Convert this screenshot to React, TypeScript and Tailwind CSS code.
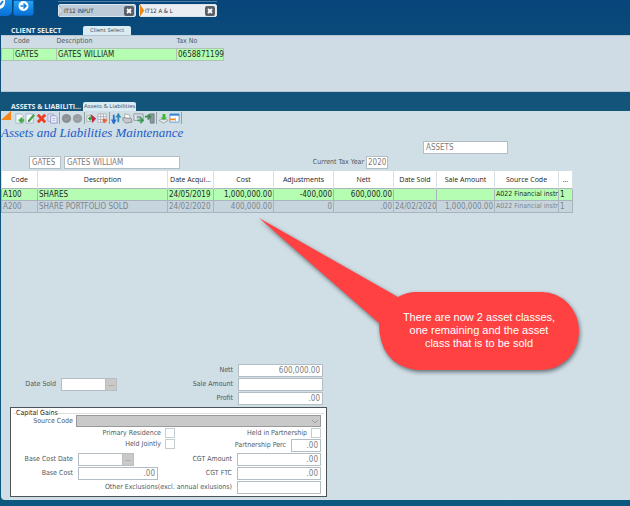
import type { ReactNode } from 'react'

const tools: (ReactNode | null)[] = [
  <><path d="M2 1h6l2 2v8H2z" fill="#f4f8fb" stroke="#a5b4c4" /><path d="M8 5v6M5 8h6" stroke="#3fae3f" strokeWidth="2.4" /></>,
  <><path d="M1 1h8v10H1z" fill="#f4f8fb" stroke="#a5b4c4" /><path d="M4 9l6-7" stroke="#45a545" strokeWidth="2.4" /><path d="M3 10l1-2 1 1z" fill="#555" /></>,
  <path d="M2 2l8 8M10 2l-8 8" stroke="#ec3c22" strokeWidth="3" />,
  <><path d="M1 1h6v8H1z" fill="#e3e6f8" stroke="#a3a8d2" /><path d="M4 3h5l2 2v6H4z" fill="#eef0fc" stroke="#9298c8" /><path d="M6 6h3M6 8h3" stroke="#a9afdb" /></>,
  null,
  <><circle cx="6" cy="6" r="5" fill="#8b9094" /><path d="M4 6l1.5 1.5L8 5" fill="none" stroke="#a5aaad" /></>,
  <><circle cx="6" cy="6" r="5" fill="#999ea2" /><path d="M4 6l1.5 1.5L8 5" fill="none" stroke="#b0b5b8" /></>,
  null,
  <><path d="M1 3h6v6H1z" fill="#fff" stroke="#a9a9a9" /><path d="M2 6l3-3v2h3v2H5v2z" fill="#249a38" /><path d="M5 1l6 5-4 5z" fill="#c22846" /></>,
  <><path d="M1 1h9v9H1z" fill="#fff" stroke="#aab" /><path d="M1 4h9M1 7h9M4 1v9M7 1v9" stroke="#aab" /><path d="M6 8h5M8 6v5" stroke="#e4632e" strokeWidth="2" /></>,
  null,
  <><path d="M3 2v6M1.500 8l1.500 3 1.500-3z" stroke="#2a6fd0" strokeWidth="2" fill="#2a6fd0" /><path d="M8 10V4M6.500 4L8 1.500 9.500 4z" stroke="#2f8fb0" strokeWidth="2" fill="#2f8fb0" /></>,
  <><path d="M3 1l5 1 1 4H3z" fill="#fff" stroke="#aaa" /><path d="M1 5l9 1 1 4-7 1-3-3z" fill="#c6c9cd" stroke="#8b9095" /></>,
  <><path d="M1 1h10v7H1z" fill="#dfe7ea" stroke="#8a949a" /><path d="M4 3h5v3H4z" fill="#92a4ad" /><path d="M5 8h5M8 5l3 3-3 3" fill="none" stroke="#3f9c55" strokeWidth="2" /></>,
  <><path d="M6 1h5v10H7z" fill="#8b989f" stroke="#6c7a82" /><path d="M1 4h6M4 2l3 2-3 3" fill="none" stroke="#3f8b50" strokeWidth="2" /></>,
  null,
  <><path d="M1 8l5-2 5 2-5 3z" fill="#e4e8ea" stroke="#98a3aa" /><path d="M5 1h3v4h2L6 8 3 5h2z" fill="#3db52d" /></>,
  <><path d="M1 1h10v9H1z" fill="#fff" stroke="#5b99da" /><path d="M1 2h10" stroke="#3d86d8" strokeWidth="2" /><path d="M1 7h6" stroke="#f28a1c" strokeWidth="2" /><path d="M7 5v5" stroke="#9bbfe5" /></>,
]

const columns = [
  { label: 'Code', width: 'w-[36px]', cell: 'text-left' },
  { label: 'Description', width: 'w-[130px]', cell: 'text-left' },
  { label: 'Date Acqui...', width: 'w-[46px]', cell: 'text-left' },
  { label: 'Cost', width: 'w-[60px]', cell: 'text-right' },
  { label: 'Adjustments', width: 'w-[60px]', cell: 'text-right' },
  { label: 'Nett', width: 'w-[60px]', cell: 'text-right' },
  { label: 'Date Sold', width: 'w-[43px]', cell: 'text-left' },
  { label: 'Sale Amount', width: 'w-[58px]', cell: 'text-right' },
  { label: 'Source Code', width: 'w-[64px]', cell: 'text-left text-[7px]' },
  { label: '...', width: 'w-[14px]', cell: 'text-left' },
]

const rows = [
  ['A100', 'SHARES', '24/05/2019', '1,000,000.00', '-400,000', '600,000.00', '', '', 'A022 Financial instr', '1'],
  ['A200', 'SHARE PORTFOLIO SOLD', '24/02/2020', '400,000.00', '0', '.00', '24/02/2020', '1,000,000.00', 'A022 Financial instr', '1'],
]

const box = 'h-[13px] border border-[#b4bdc3] bg-white px-[2px] text-[8px] text-[#7b7b7b] outline-none'

function Tab({ label, active }: { label: string; active?: boolean }) {
  return (
    <div className={`flex h-[13px] w-[78px] items-center rounded-[2px] border border-[#dbe5ec] ${active ? 'bg-[#e9eef3]' : 'bg-[#bccbd7]'}`}>
      <svg viewBox="0 0 5 11" className="h-[11px] w-[5px] shrink-0">
        <path d="M0 0l4 5.500-4 5.500z" fill={active ? '#f58a0b' : '#d7dade'} stroke={active ? '#d97400' : '#8b98a3'} strokeWidth="0.500" />
      </svg>
      <button className="flex-1 text-left text-[6px] text-[#333]">{label}</button>
      <button aria-label={`Close ${label}`} className="mr-px shrink-0">
        <svg viewBox="0 0 10 10" className="size-[10px]">
          <rect width="10" height="10" rx="2" fill="#5a6068" />
          <path d="M3 3l4 4M7 3l-4 4" stroke="#fff" strokeWidth="1.800" />
        </svg>
      </button>
    </div>
  )
}

function SectionTitle({ title, tab }: { title: string; tab: string }) {
  return (
    <div className="flex h-[9px] items-center pl-[11px]">
      <h2 className="w-[72px] font-['Open_Sans',sans-serif] text-[7px] font-bold whitespace-nowrap text-[#e6eef5]">{title}</h2>
      <button className="h-[9px] min-w-[48px] rounded-t-[2px] bg-[#d9ebf3] px-px text-center font-['Open_Sans',sans-serif] text-[6px] whitespace-nowrap text-[#44525c]">{tab}</button>
    </div>
  )
}

function Field({ id, label, value = '', width, labelWidth }: { id: string; label: string; value?: string; width: string; labelWidth: string }) {
  return (
    <div className="flex items-center gap-[5px]">
      <label htmlFor={id} className={`${labelWidth} text-right`}>{label}</label>
      <input id={id} defaultValue={value} className={`${box} ${width} text-right`} />
    </div>
  )
}

function DateField({ id, label, labelWidth }: { id: string; label: string; labelWidth: string }) {
  return (
    <div className="flex items-center gap-[5px]">
      <label htmlFor={id} className={`${labelWidth} text-right`}>{label}</label>
      <div className="flex">
        <input id={id} className={`${box} w-[44px] border-r-0`} />
        <button aria-label={`Pick ${label}`} className="h-[13px] w-[12px] border border-[#b9bec1] bg-[#c9c9c9] text-[#777]">...</button>
      </div>
    </div>
  )
}

function Check({ id, label }: { id: string; label: string }) {
  return (
    <div className="flex items-center justify-end gap-[4px]">
      <label htmlFor={id}>{label}</label>
      <input id={id} type="checkbox" className="size-[10px] appearance-none border border-[#c6cdd1] bg-white" />
    </div>
  )
}

function Callout() {
  return (
    <div className="absolute top-[216px] left-[257px] h-[160px] w-[328px]">
      <svg viewBox="0 0 328 160" className="absolute inset-0 size-full drop-shadow-[1px_2px_2px_rgba(40,50,60,0.65)]">
        <path d="M2 2L141 81Q150 76 159 76H285A37 39 0 0 1 285 154H159Q122 148 122 107Z" fill="#ff4141" />
      </svg>
      <p className="absolute top-[95px] left-[122px] w-[200px] text-center font-['Liberation_Sans',sans-serif] text-[11px] leading-[13px] text-white">
        There are now 2 asset classes,<br />one remaining and the asset<br />class that is to be sold
      </p>
    </div>
  )
}

export default function App() {
  return (
    <main className="relative flex min-h-screen flex-col overflow-hidden bg-linear-to-b from-[#07457a] via-[#12547a] via-20% to-[#0d587f] font-['DejaVu_Sans_Condensed','DejaVu_Sans',sans-serif] text-[7px] leading-[9px] text-[#4f595f]">
      <header className="flex h-[26px] items-start">
        <button aria-label="Edit" className="h-[16px] w-[12px] rounded-br-[5px] bg-linear-to-b from-[#1e9bf0] to-[#0a6fd6]">
          <svg viewBox="0 0 12 16" className="h-[16px] w-[12px]">
            <path d="M0 0h5q1 7-5 9z" fill="#fff" />
            <path d="M0 5l3-4" stroke="#1b83dd" strokeWidth="2" />
          </svg>
        </button>
        <button aria-label="Next" className="ml-px h-[16px] w-[21px] rounded-b-[3px] border border-[#0a63b8] bg-linear-to-b from-[#27a5f2] to-[#0870d8]">
          <svg viewBox="0 0 19 14" className="h-[14px] w-[19px]">
            <circle cx="9.500" cy="5" r="5" fill="#fff" />
            <path d="M6.500 5h5M9.500 2.500L12 5 9.500 7.500" fill="none" stroke="#1481df" strokeWidth="1.500" />
          </svg>
        </button>
        <nav className="mt-px ml-[24px] flex gap-[3px] border-t border-[#5280a5] pt-[2px]">
          <Tab label="IT12 INPUT" />
          <Tab label="IT12 A & L" active />
        </nav>
      </header>

      <SectionTitle title="CLIENT SELECT" tab="Client Select" />
      <section className="ml-px h-[57px] border-y border-[#b5c5d1] bg-[#d0dce5]">
        <table className="w-[222px] table-fixed border-collapse text-left">
          <thead>
            <tr className="h-[12px]">
              <th className="w-[12px]" aria-label="Selected" />
              <th className="w-[43px] font-normal">Code</th>
              <th className="w-[120px] font-normal">Description</th>
              <th className="w-[47px] font-normal">Tax No</th>
            </tr>
          </thead>
          <tbody className="text-[8px]">
            <tr className="h-[12px] bg-[#b5fdb2] text-[#222c22]">
              <td className="border border-[#adc3b3]" />
              <td className="border border-[#adc3b3] pl-px">GATES</td>
              <td className="border border-[#adc3b3] pl-px">GATES WILLIAM</td>
              <td className="border border-[#adc3b3] pl-px">0658871199</td>
            </tr>
          </tbody>
        </table>
      </section>

      <div className="h-[10px]" />
      <SectionTitle title="ASSETS & LIABILITI..." tab="Assets & Liabilities" />
      <section className="mb-[6px] ml-px flex flex-1 flex-col rounded-bl-[4px] bg-[#d0dee5] pb-[3px]">
        <div className="flex h-[14px] items-center">
          <svg viewBox="0 0 10 10" className="mr-[3px] size-[10px] self-start"><path d="M10 0v9H0z" fill="#f78416" /></svg>
          {tools.map((icon, i) =>
            icon ? (
              <button key={i} aria-label={`Tool ${i + 1}`} className="w-[11px]">
                <svg viewBox="0 0 12 12" className="size-[11px]">{icon}</svg>
              </button>
            ) : (
              <span key={i} className="mx-px h-[12px] w-px bg-[#93a0a8]" />
            )
          )}
          <span className="ml-px h-[12px] w-px bg-[#93a0a8]" />
        </div>
        <h1 className="h-[16px] font-['Liberation_Serif',serif] text-[13px] leading-[15px] text-[#1c5cc9] italic">Assets and Liabilities Maintenance</h1>

        <div className="flex pl-[422px]">
          <input aria-label="Category" defaultValue="ASSETS" className={`${box} w-[85px]`} />
        </div>
        <div className="mt-[2px] flex items-center pl-[28px]">
          <input aria-label="Client code" defaultValue="GATES" className={`${box} w-[32px]`} />
          <input aria-label="Client name" defaultValue="GATES WILLIAM" className={`${box} ml-[3px] w-[116px]`} />
          <label htmlFor="year" className="ml-[104px] w-[80px] text-right">Current Tax Year</label>
          <input id="year" defaultValue="2020" className={`${box} ml-[2px] w-[22px] px-px`} />
        </div>

        <table className="mt-[2px] w-[571px] table-fixed border-collapse text-[8px]">
          <thead>
            <tr className="h-[17px] bg-white text-[7px] text-[#222]">
              {columns.map(c => (
                <th key={c.label} className={`${c.width} border-x border-[#d9e1e6] p-0 text-center font-['Open_Sans',sans-serif] font-medium whitespace-nowrap`}>{c.label}</th>
              ))}
            </tr>
          </thead>
          <tbody>
            {rows.map((row, r) => (
              <tr key={row[0]} className={`h-[12px] ${r === 0 ? 'bg-[#b5fdb2] text-[#1f2b1f]' : 'bg-[#c6d5de] text-[#7d868c]'}`}>
                {row.map((cell, i) => (
                  <td key={i} className={`${columns[i].cell} overflow-hidden border border-[#a9b5bb] px-px py-0 leading-[9px] whitespace-nowrap`}>{cell}</td>
                ))}
              </tr>
            ))}
          </tbody>
        </table>

        <div className="min-h-[20px] flex-1" />

        <div className="flex items-center">
          <DateField id="date-sold" label="Date Sold" labelWidth="w-[55px]" />
          <div className="flex flex-col gap-px">
            <Field id="nett" label="Nett" value="600,000.00" labelWidth="w-[116px]" width="w-[85px]" />
            <Field id="sale" label="Sale Amount" labelWidth="w-[116px]" width="w-[85px]" />
            <Field id="profit" label="Profit" value=".00" labelWidth="w-[116px]" width="w-[85px]" />
          </div>
        </div>

        <div className="mt-[2px] ml-[9px] w-[317px] border border-[#4b5356] bg-white px-[2px] pt-[3px] pb-[2px]">
          <fieldset className="border-t border-[#dde1e3]">
            <legend className="ml-[3px] h-[4px] leading-[4px] text-[#222]">Capital Gains</legend>
            <div className="flex items-center justify-between pr-[3px]">
              <label htmlFor="source" className="w-[60px] text-right">Source Code</label>
              <div className="relative">
                <select id="source" className="block h-[12px] w-[245px] appearance-none border border-[#999] bg-[#c9c9c9]"><option></option></select>
                <svg viewBox="0 0 8 5" className="pointer-events-none absolute top-[4px] right-[2px] h-[5px] w-[8px]"><path d="M1 1l3 3 3-3" fill="none" stroke="#999" /></svg>
              </div>
            </div>
            <div className="mt-px flex justify-between pr-[3px]">
              <div className="flex w-[162px] flex-col gap-px">
                <Check id="primary" label="Primary Residence" />
                <Check id="jointly" label="Held Jointly" />
              </div>
              <div className="flex flex-col gap-px">
                <Check id="partnership" label="Held in Partnership" />
                <Field id="perc" label="Partnership Perc" value=".00" labelWidth="w-[64px]" width="w-[30px]" />
              </div>
            </div>
            <div className="mt-px flex justify-between pr-[3px]">
              <div className="flex flex-col gap-px">
                <DateField id="base-date" label="Base Cost Date" labelWidth="w-[60px]" />
                <Field id="base-cost" label="Base Cost" value=".00" labelWidth="w-[60px]" width="w-[80px]" />
              </div>
              <div className="flex flex-col gap-px">
                <Field id="cgt" label="CGT Amount" value=".00" labelWidth="w-[60px]" width="w-[84px]" />
                <Field id="ftc" label="CGT FTC" value=".00" labelWidth="w-[60px]" width="w-[84px]" />
              </div>
            </div>
            <div className="mt-px flex justify-end pr-[3px]">
              <Field id="other" label="Other Exclusions(excl. annual exlusions)" labelWidth="w-[180px]" width="w-[84px]" />
            </div>
          </fieldset>
        </div>
      </section>
      <Callout />
    </main>
  )
}
